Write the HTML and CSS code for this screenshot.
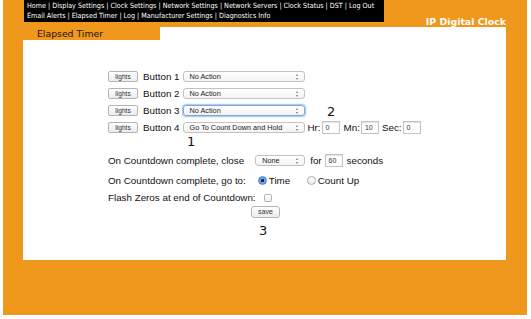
FILE: index.html
```html
<!DOCTYPE html>
<html>
<head>
<meta charset="utf-8">
<title>Elapsed Timer</title>
<link rel="stylesheet" href="styles.css">
</head>
<body>
<div class="frame">
  <header class="top">
    <nav class="nav">
      <div>Home | Display Settings | Clock Settings | Network Settings | Network Servers | Clock Status | DST | Log Out</div>
      <div>Email Alerts | Elapsed Timer | Log | Manufacturer Settings | Diagnostics Info</div>
    </nav>
    <div class="brand">IP Digital Clock</div>
  </header>
  <main class="panel">
    <div class="tab">Elapsed Timer</div>
    <div class="form">
      <div class="row">
        <span class="btn lights">lights</span>
        <span class="label">Button 1</span>
        <span class="select wide">No Action<i class="arr"></i></span>
      </div>
      <div class="row">
        <span class="btn lights">lights</span>
        <span class="label">Button 2</span>
        <span class="select wide">No Action<i class="arr"></i></span>
      </div>
      <div class="row">
        <span class="btn lights">lights</span>
        <span class="label">Button 3</span>
        <span class="select wide focus">No Action<i class="arr"></i></span>
      </div>
      <div class="row">
        <span class="btn lights">lights</span>
        <span class="label">Button 4</span>
        <span class="select wide">Go To Count Down and Hold<i class="arr"></i></span>
        <span class="label lbl-hr">Hr:</span><span class="input">0</span>
        <span class="label lbl-mn">Mn:</span><span class="input">10</span>
        <span class="label lbl-sec">Sec:</span><span class="input">0</span>
      </div>
      <div class="row row-close">
        <span class="label">On Countdown complete, close</span>
        <span class="select small">None<i class="arr"></i></span>
        <span class="label lbl-for">for</span><span class="input">60</span>
        <span class="label lbl-sec2">seconds</span>
      </div>
      <div class="row row-goto">
        <span class="label">On Countdown complete, go to:</span>
        <span class="radio on first"></span><span class="label lbl-time">Time</span>
        <span class="radio"></span><span class="label">Count Up</span>
      </div>
      <div class="row">
        <span class="label">Flash Zeros at end of Countdown:</span>
        <span class="check"></span>
      </div>
      <div class="save-row">
        <span class="btn save">save</span>
      </div>
    </div>
    <span class="note n1">1</span>
    <span class="note n2">2</span>
    <span class="note n3">3</span>
  </main>
</div>
</body>
</html>
```
FILE: styles.css
```css
html, body {
  margin: 0;
  padding: 0;
  background: #ffffff;
}
body {
  font-family: "Liberation Sans", Arial, sans-serif;
  color: #111;
}
.frame {
  margin-left: 3px;
  width: 483px;
  height: 315px;
  padding: 0 21px 0 20px;
  background: #f0981c;
}
.top {
  height: 27px;
  display: flex;
  justify-content: space-between;
}
.nav {
  margin-left: 1px;
  width: 360px;
  height: 22px;
  padding: 1px 0 0 3px;
  box-sizing: border-box;
  background: #000;
  color: #fff;
  font-family: "DejaVu Sans Condensed", "DejaVu Sans", sans-serif;
  font-stretch: condensed;
  font-size: 7.15px;
  line-height: 9.6px;
  white-space: nowrap;
  overflow: hidden;
}
.brand {
  align-self: flex-end;
  font-family: "DejaVu Sans", sans-serif;
  font-weight: bold;
  font-size: 9.4px;
  line-height: 11px;
  color: #fff;
}
.panel {
  position: relative;
  height: 233px;
  background: #fff;
}
.tab {
  width: 123px;
  height: 13px;
  padding-left: 14px;
  background: #f0981c;
  font-family: "DejaVu Sans", sans-serif;
  font-size: 9.3px;
  line-height: 14px;
  color: #1a1206;
}
.form {
  padding: 28px 0 0 85px;
  font-size: 9.8px;
}
.row {
  height: 17px;
  display: flex;
  align-items: center;
  white-space: nowrap;
}
.label {
  line-height: 12px;
}
.btn {
  box-sizing: border-box;
  height: 11px;
  border: 1px solid #b4b4b4;
  border-radius: 2px;
  background: linear-gradient(#ffffff, #ececec);
  font-size: 6.6px;
  line-height: 9px;
  color: #333;
  text-align: center;
}
.lights {
  width: 30px;
  margin-right: 5px;
}
.select {
  position: relative;
  box-sizing: border-box;
  height: 11px;
  margin-left: 3px;
  padding-left: 6px;
  border: 1px solid #c2c2c2;
  border-radius: 3px;
  background: linear-gradient(#ffffff, #f3f3f3);
  font-size: 7.3px;
  line-height: 9px;
  color: #222;
}
.select.wide { width: 122px; }
.select.small { width: 50px; margin-left: 11px; }
.select.focus {
  border-color: #7ea6dc;
  box-shadow: 0 0 1.5px 1px #9cc0ee;
}
.arr {
  position: absolute;
  right: 5px;
  top: 2px;
  width: 3px;
  height: 6px;
}
.arr::before, .arr::after {
  content: "";
  position: absolute;
  left: 0;
  border-left: 1.5px solid transparent;
  border-right: 1.5px solid transparent;
}
.arr::before { top: 0; border-bottom: 2px solid #777; }
.arr::after { bottom: 0; border-top: 2px solid #777; }
.input {
  box-sizing: border-box;
  width: 18px;
  height: 13px;
  border: 1px solid #c4c4c4;
  box-shadow: inset 0 1px 1px #e2e2e2;
  background: #fff;
  font-size: 7px;
  line-height: 11px;
  padding-left: 3px;
  color: #333;
}
.lbl-hr { margin-left: 3px; margin-right: 1px; }
.lbl-mn { margin-left: 4px; margin-right: 1px; }
.lbl-sec { margin-left: 3px; margin-right: 1px; }
.lbl-for { margin-left: 5px; margin-right: 3px; }
.lbl-sec2 { margin-left: 4px; }
.row-close { margin-top: 16px; }
.row-goto { margin-top: 3px; }
.radio {
  box-sizing: border-box;
  width: 9px;
  height: 9px;
  margin: 0 2px 0 4px;
  border-radius: 50%;
  border: 1px solid #aaa;
  background: linear-gradient(#fff, #eee);
}
.radio.first { margin-left: 12px; }
.radio.on {
  border-color: #4f86cf;
  background: radial-gradient(circle, #1c2a3c 0 1.4px, #7fb0ec 1.8px, #3f7cd0 100%);
}
.lbl-time { width: 34px; }
.check {
  box-sizing: border-box;
  width: 8px;
  height: 8px;
  margin-left: 8px;
  border: 1px solid #b0b0b0;
  border-radius: 1.5px;
  background: linear-gradient(#fff, #eee);
}
.save-row {
  display: flex;
  padding-left: 143px;
}
.save {
  width: 29px;
  height: 12px;
  line-height: 10px;
  font-size: 7px;
  border-radius: 3px;
}
.note {
  position: absolute;
  font-family: "DejaVu Sans", sans-serif;
  font-size: 13px;
  line-height: 14px;
  color: #111;
}
.n1 { left: 164px; top: 108px; }
.n2 { left: 304px; top: 78px; }
.n3 { left: 236px; top: 197px; }
```
